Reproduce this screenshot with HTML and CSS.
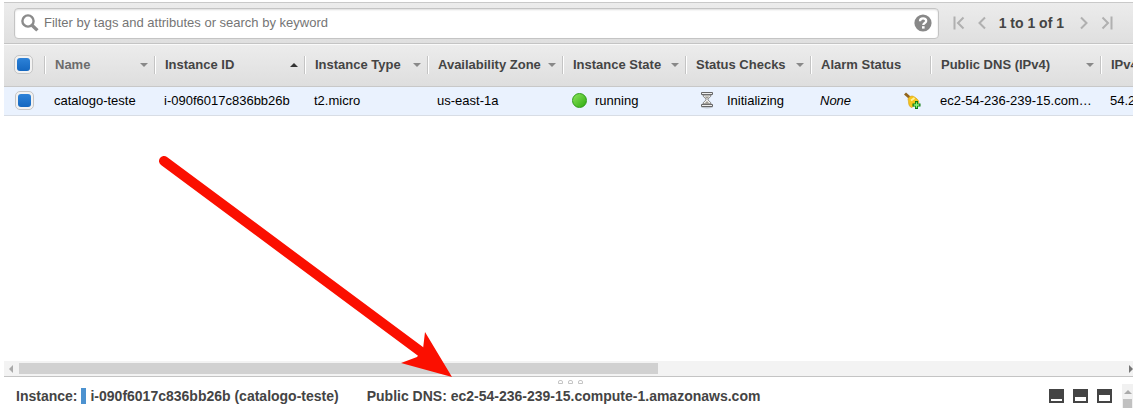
FILE: index.html
```html
<!DOCTYPE html>
<html lang="en">
<head>
<meta charset="utf-8">
<title>EC2 Instances</title>
<link rel="stylesheet" href="styles.css">
</head>
<body>
<main class="console">
  <div class="toolbar">
    <label class="search">
      <svg class="search-icon" viewBox="0 0 18 18" width="18" height="18"><circle cx="7" cy="7" r="5.6" fill="none" stroke="#8b8b8b" stroke-width="2.4"/><path d="M11 11.2L16.4 16.4" stroke="#8b8b8b" stroke-width="3.4"/></svg>
      <input class="search-input" type="text" aria-label="Filter" placeholder="Filter by tags and attributes or search by keyword">
      <button class="icon-button" type="button" aria-label="Help"><svg viewBox="0 0 18 18" width="18" height="18"><circle cx="9" cy="9" r="8.6" fill="#888"/><path d="M6 7.2C6 3.4 12.2 3.5 12.2 7C12.2 9 9.3 9 9.3 11" fill="none" stroke="#fff" stroke-width="2.3"/><path d="M8 12.2h2.6v2.4H8z" fill="#fff"/></svg></button>
    </label>
    <nav class="pager">
      <button class="icon-button" type="button" aria-label="First page"><svg viewBox="0 0 12 14" width="12" height="14"><path d="M1.5 0.5v13M10.500 1.500L5 7l5.500 5.500" class="pager-stroke"/></svg></button>
      <button class="icon-button" type="button" aria-label="Previous page"><svg viewBox="0 0 8 14" width="8" height="14"><path d="M7 1.500L1.500 7L7 12.500" class="pager-stroke"/></svg></button>
      <span class="pager-text">1 to 1 of 1</span>
      <button class="icon-button" type="button" aria-label="Next page"><svg viewBox="0 0 8 14" width="8" height="14"><path d="M1 1.500L6.500 7L1 12.500" class="pager-stroke"/></svg></button>
      <button class="icon-button" type="button" aria-label="Last page"><svg viewBox="0 0 12 14" width="12" height="14"><path d="M10.500 0.500v13M1.500 1.500L7 7l-5.500 5.500" class="pager-stroke"/></svg></button>
    </nav>
  </div>
  <div class="grid-area">
    <table class="instances">
      <colgroup><col class="w-check"><col class="w-name"><col class="w-id"><col class="w-type"><col class="w-zone"><col class="w-state"><col class="w-checks"><col class="w-alarm"><col class="w-dns"><col class="w-ip"></colgroup>
      <thead>
        <tr>
          <th><input class="check" type="checkbox" checked aria-label="Select all"></th>
          <th><div class="head muted">Name<i class="caret"></i></div></th>
          <th><div class="head">Instance ID<i class="caret up"></i></div></th>
          <th><div class="head">Instance Type<i class="caret"></i></div></th>
          <th><div class="head">Availability Zone<i class="caret"></i></div></th>
          <th><div class="head">Instance State<i class="caret"></i></div></th>
          <th><div class="head">Status Checks<i class="caret"></i></div></th>
          <th><div class="head">Alarm Status</div></th>
          <th><div class="head">Public DNS (IPv4)<i class="caret"></i></div></th>
          <th><div class="head">IPv4</div></th>
        </tr>
      </thead>
      <tbody>
        <tr>
          <td class="check-cell"><input class="check" type="checkbox" checked aria-label="Select catalogo-teste"></td>
          <td>catalogo-teste</td>
          <td>i-090f6017c836bb26b</td>
          <td>t2.micro</td>
          <td>us-east-1a</td>
          <td><div class="with-icon"><span class="running"></span>running</div></td>
          <td><div class="with-icon checks"><svg viewBox="0 0 14 18" width="14" height="18"><ellipse cx="7" cy="15" rx="6" ry="1.500" fill="#000" opacity=".18"/><path d="M1.500 .5h11v2h-11zM1.500 12.500h11v2h-11z" fill="#eee" stroke="#666"/><path d="M3 3C3 5.500 6 6 6 7.500S3 9.500 3 12h8C11 9.500 8 9 8 7.500S11 5.500 11 3z" fill="#f4f4f2" stroke="#777"/><path d="M4.500 4.500h5L7 7zM4 12l3-3l3 3z" fill="#a09d96"/></svg>Initializing</div></td>
          <td><div class="with-icon alarm"><em>None</em><button class="icon-button" type="button" aria-label="Add alarm"><svg viewBox="0 0 17 17" width="17" height="17"><path d="M1 1.500l4.500 4" stroke="#91651e" stroke-width="3"/><path d="M4 7C5 4.500 8 3 10.500 5c2 1.500 4 2.500 4.500 5.500L7.500 15.500C4 14 5 10.500 4 7z" fill="#f6c51b" stroke="#d9a21a" stroke-width=".7"/><path d="M7 8.500l3.500-2.500" stroke="#fff09a" stroke-width="2"/><path d="M11 9h3v2.500h2.500v3H14V17h-3v-2.500H8.500v-3H11z" fill="#08770b"/><path d="M12.500 10.200v5.600M9.700 13h5.600" stroke="#8df778" stroke-width="1.300"/></svg></button></div></td>
          <td class="dns">ec2-54-236-239-15.com…</td>
          <td>54.2</td>
        </tr>
      </tbody>
    </table>
  </div>
  <div class="hscroll"><i class="arrow-left"></i><span class="track"><span class="thumb"></span></span><i class="arrow-right"></i></div>
  <footer class="details">
    <div class="grip"><i></i><i></i><i></i></div>
    <div class="summary">
      <span>Instance:</span><i class="marker"></i><span>i-090f6017c836bb26b (catalogo-teste)</span>
      <span class="public">Public DNS: ec2-54-236-239-15.compute-1.amazonaws.com</span>
    </div>
    <div class="panes">
      <button class="pane" type="button" aria-label="Small panel"><span class="pane-fill small"></span></button>
      <button class="pane" type="button" aria-label="Medium panel"><span class="pane-fill medium"></span></button>
      <button class="pane" type="button" aria-label="Large panel"><span class="pane-fill large"></span></button>
    </div>
    <div class="vscroll"><i class="arrow-up"></i><span class="vthumb"></span></div>
  </footer>
</main>
<svg class="pointer" viewBox="0 0 300 224" width="300" height="224"><path d="M10 7L270 200" stroke="#fb0f00" stroke-width="10" stroke-linecap="round"/><path d="M298 223L247 209L263 203L269 195L271 178z" fill="#fb0f00"/></svg>
</body>
</html>
```
FILE: styles.css
```css
* { box-sizing: border-box; }

body {
  margin: 0;
  background: #fff;
  color: #111;
  font: 13px/18px "Liberation Sans", Arial, sans-serif;
  overflow: hidden;
}

.console {
  display: flex;
  flex-direction: column;
  height: 100vh;
  padding: 2px 0 0 4px;
}

.icon-button {
  display: block;
  padding: 0;
  border: 0;
  background: none;
}
.icon-button svg { display: block; }

.toolbar {
  display: flex;
  align-items: center;
  flex: none;
  height: 42px;
  padding: 0 20px 0 10px;
  border-top: 1px solid #c9c9c9;
  border-bottom: 1px solid #c4c4c4;
  background: linear-gradient(#ececec, #dfdfdf);
}
.search {
  display: flex;
  align-items: center;
  flex: 1;
  gap: 5px;
  height: 31px;
  padding: 0 6px;
  border: 1px solid #c4c4c4;
  border-radius: 4px;
  background: #fff;
  box-shadow: inset 0 1px 2px #ddd;
}
.search-input {
  flex: 1;
  min-width: 0;
  padding: 0 0 1px;
  border: 0;
  outline: 0;
  background: transparent;
  font: inherit;
}
.search-input::placeholder { color: #757575; opacity: 1; }

.pager {
  display: flex;
  align-items: center;
  gap: 14px;
  padding-left: 14px;
}
.pager-stroke { fill: none; stroke: #b0b0b0; stroke-width: 2; }
.pager-text {
  padding-right: 3px;
  color: #444;
  font-size: 14px;
  font-weight: bold;
  white-space: nowrap;
}
.pager { gap: 13px; }

.grid-area { flex: 1; min-height: 0; overflow: hidden; }
.instances {
  width: 1246px;
  border-collapse: separate;
  border-spacing: 0;
  table-layout: fixed;
}
.w-check { width: 40px; }
.w-name { width: 110px; }
.w-id { width: 150px; }
.w-type { width: 123px; }
.w-zone { width: 135px; }
.w-state { width: 123px; }
.w-checks { width: 125px; }
.w-alarm { width: 120px; }
.w-dns { width: 170px; }
.w-ip { width: 150px; }

th {
  height: 43px;
  padding: 0 0 2px;
  border-top: 1px solid #fafafa;
  border-bottom: 1px solid #c8c8c8;
  background: linear-gradient(#ececec, #dedede);
  color: #444;
  text-align: left;
}
.head {
  display: flex;
  align-items: center;
  justify-content: space-between;
  height: 18px;
  padding: 0 6px 0 10px;
  border-left: 1px solid #c4c4c4;
  box-shadow: inset 1px 0 #fff;
  white-space: nowrap;
}
.muted { color: #6c6c6c; }
.caret {
  border: 4px solid transparent;
  border-top-color: #888;
  border-bottom: 0;
}
.caret.up {
  border-top: 0;
  border-bottom: 4px solid #333;
}

td {
  height: 29px;
  padding: 0 0 1px 10px;
  border-bottom: 1px solid #d8dde5;
  background: #eaf2fe;
  color: #000;
  white-space: nowrap;
}
.check {
  display: block;
  appearance: none;
  width: 19px;
  height: 19px;
  margin: 0 0 0 10px;
  padding: 2px;
  border: 1px solid #c5c5c5;
  border-radius: 5px;
  background: #f2f2f2;
}
.check:checked::before {
  content: "";
  display: block;
  width: 13px;
  height: 13px;
  border-radius: 3px;
  background: linear-gradient(#2d82d8, #1467c0);
}
.check-cell { padding-left: 1px; }

.with-icon { display: flex; align-items: center; gap: 8px; }
.running {
  width: 15px;
  height: 15px;
  border: 1px solid #2c9b14;
  border-radius: 50%;
  background: linear-gradient(135deg, #8be45c, #2fac10);
}
.checks { gap: 13px; padding-left: 5px; }
.alarm { justify-content: space-between; padding-right: 9px; }

.hscroll {
  display: flex;
  align-items: center;
  flex: none;
  height: 15px;
  padding: 0 0 0 5px;
  background: #f3f3f3;
}
.track { flex: 1; margin: 0 17px 0 6px; }
.thumb {
  display: block;
  width: 58.5%;
  height: 11px;
  background: #d1d1d1;
}
.arrow-left, .arrow-right { border: 4px solid transparent; }
.arrow-left { border-right-color: #aaa; border-left: 0; }
.arrow-right { border-left-color: #777; border-right: 0; }

.details {
  display: grid;
  grid-template-columns: 1fr auto 11px;
  flex: none;
  height: 32px;
  border-top: 1px solid #c4c4c4;
  color: #444;
  font-size: 14px;
  font-weight: bold;
}
.grip {
  display: flex;
  grid-area: 1 / 1 / 2 / 4;
  justify-content: center;
  gap: 5px;
  padding: 3px 0 0 3px;
}
.grip i {
  width: 5px;
  height: 4px;
  border: 1px solid #c4c4c4;
  border-radius: 2px 2px 0 0;
}
.summary {
  display: flex;
  grid-area: 1 / 1;
  align-items: center;
  padding: 7px 0 0 12px;
  white-space: nowrap;
}
.marker { width: 5px; height: 16px; margin: 0 4px; background: #4c92d0; }
.public { margin-left: 28px; }
.panes {
  display: flex;
  grid-area: 1 / 2;
  align-items: center;
  gap: 9px;
  padding: 6px 10px 0 0;
}
.pane {
  display: flex;
  align-items: flex-end;
  width: 15px;
  height: 14px;
  padding: 2px;
  border: 0;
  background: #444;
}
.pane-fill { flex: 1; background: #fff; }
.small { height: 2px; }
.medium { height: 4px; }
.large { height: 6px; }
.vscroll {
  display: flex;
  flex-direction: column;
  grid-area: 1 / 3;
  align-items: center;
  margin-top: 7px;
  padding-top: 6px;
  background: #f1f1f1;
}
.arrow-up { border: 4px solid transparent; border-bottom-color: #aaa; border-top: 0; }
.vthumb { flex: 1; width: 9px; margin-top: 5px; background: #c1c1c1; }

.pointer { position: absolute; left: 154px; top: 154px; pointer-events: none; }
```
